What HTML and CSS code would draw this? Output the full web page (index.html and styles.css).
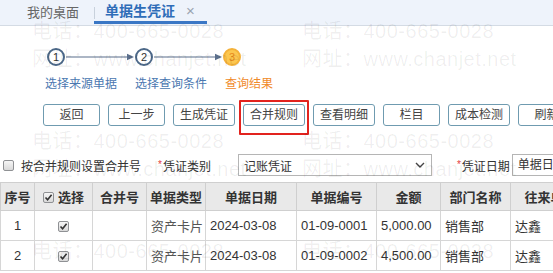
FILE: index.html
```html
<!DOCTYPE html>
<html lang="zh-CN">
<head>
<meta charset="utf-8">
<title>单据生凭证</title>
<link rel="stylesheet" href="styles.css">
</head>
<body>
<div class="page">
  <div class="tabbar">
    <div class="tab">我的桌面</div>
    <div class="tab active">单据生凭证<span class="close">×</span></div>
  </div>

  <div class="steps">
    <div class="track">
      <span class="dot">1</span>
      <svg class="arrow" width="70" height="10" viewBox="0 0 70 10"><line x1="1" y1="5" x2="64" y2="5" stroke="#5b6f8c" stroke-width="1.2"/><polygon points="62,1.8 69,5 62,8.2" fill="#5b6f8c"/></svg>
      <span class="dot">2</span>
      <svg class="arrow" width="70" height="10" viewBox="0 0 70 10"><line x1="1" y1="5" x2="64" y2="5" stroke="#5b6f8c" stroke-width="1.2"/><polygon points="62,1.8 69,5 62,8.2" fill="#5b6f8c"/></svg>
      <span class="dot current">3</span>
    </div>
    <div class="step-labels">
      <span>选择来源单据</span>
      <span>选择查询条件</span>
      <span class="current">查询结果</span>
    </div>
  </div>

  <div class="toolbar">
    <button class="btn">返回</button>
    <button class="btn">上一步</button>
    <button class="btn">生成凭证</button>
    <button class="btn highlight">合并规则</button>
    <button class="btn">查看明细</button>
    <button class="btn">栏目</button>
    <button class="btn">成本检测</button>
    <button class="btn">刷新</button>
  </div>

  <div class="filters">
    <span class="cb"></span>
    <span class="cb-label">按合并规则设置合并号</span>
    <span class="field-label type-label"><i class="req">*</i>凭证类别</span>
    <div class="select"><span>记账凭证</span><svg class="chev" width="10" height="6" viewBox="0 0 10 6"><polyline points="1,1 5,5 9,1" fill="none" stroke="#444" stroke-width="1.4"/></svg></div>
    <span class="field-label date-label"><i class="req">*</i>凭证日期</span>
    <div class="input">单据日期</div>
  </div>

  <table class="grid">
    <colgroup>
      <col class="c-no"><col class="c-sel"><col class="c-merge"><col class="c-type"><col class="c-date"><col class="c-code"><col class="c-amt"><col class="c-dept"><col class="c-unit">
    </colgroup>
    <thead>
      <tr>
        <th>序号</th>
        <th><span class="cb checked head-cb"><svg width="9" height="9" viewBox="0 0 9 9"><polyline points="1.5,4.5 3.6,6.8 7.6,1.8" fill="none" stroke="#333" stroke-width="1.6"/></svg></span>选择</th>
        <th>合并号</th>
        <th>单据类型</th>
        <th>单据日期</th>
        <th>单据编号</th>
        <th>金额</th>
        <th>部门名称</th>
        <th>往来单位</th>
      </tr>
    </thead>
    <tbody>
      <tr>
        <td class="center">1</td>
        <td class="center"><span class="cb checked"><svg width="9" height="9" viewBox="0 0 9 9"><polyline points="1.5,4.5 3.6,6.8 7.6,1.8" fill="none" stroke="#333" stroke-width="1.6"/></svg></span></td>
        <td></td>
        <td class="muted">资产卡片</td>
        <td>2024-03-08</td>
        <td>01-09-0001</td>
        <td>5,000.00</td>
        <td>销售部</td>
        <td>达鑫</td>
      </tr>
      <tr>
        <td class="center">2</td>
        <td class="center"><span class="cb checked"><svg width="9" height="9" viewBox="0 0 9 9"><polyline points="1.5,4.5 3.6,6.8 7.6,1.8" fill="none" stroke="#333" stroke-width="1.6"/></svg></span></td>
        <td></td>
        <td class="muted">资产卡片</td>
        <td>2024-03-08</td>
        <td>01-09-0002</td>
        <td>4,500.00</td>
        <td>销售部</td>
        <td>达鑫</td>
      </tr>
    </tbody>
  </table>

  <div class="watermark">
    <span class="wm t1 l1">电话：400-665-0028</span>
    <span class="wm t2 l1">网址：www.chanjet.net</span>
    <span class="wm t1 l2">电话：400-665-0028</span>
    <span class="wm t2 l2">网址：www.chanjet.net</span>
    <span class="wm t3 l1">电话：400-665-0028</span>
    <span class="wm t4 l1">网址：www.chanjet.net</span>
    <span class="wm t3 l2">电话：400-665-0028</span>
    <span class="wm t4 l2">网址：www.chanjet.net</span>
    <span class="wm t5 l1">电话：400-665-0028</span>
    <span class="wm t5 l2">电话：400-665-0028</span>
  </div>
</div>
</body>
</html>
```

FILE: styles.css
```css
html, body {
  margin: 0;
  padding: 0;
  background: #fff;
}
body {
  font-family: "Liberation Sans", "Noto Sans CJK SC", sans-serif;
  font-size: 12px;
  color: #333;
  overflow: hidden;
}
.page {
  position: relative;
  width: 553px;
  height: 273px;
  overflow: hidden;
}

/* tabs */
.tabbar {
  display: flex;
  height: 25px;
  background: #eef3fb;
  border-bottom: 1px solid #d4dbe4;
}
.tab {
  font-size: 13px;
  line-height: 25px;
  color: #666;
  padding: 0 15px 0 27px;
  white-space: nowrap;
}
.tab.active {
  position: relative;
  box-sizing: border-box;
  height: 24px;
  line-height: 22px;
  padding: 0 12px 0 11px;
  font-size: 14px;
  color: #2f6db8;
  font-weight: bold;
  border-bottom: 3px solid #3a77c5;
}
.tab.active::before {
  content: "";
  position: absolute;
  left: 0;
  top: 7px;
  width: 1px;
  height: 12px;
  background: #c8d1dc;
}
.close {
  margin-left: 11px;
  font-weight: normal;
  font-size: 15px;
  color: #9aa4b0;
}

/* steps */
.steps {
  padding-top: 22px;
}
.track {
  display: flex;
  align-items: center;
  padding-left: 47px;
  height: 18px;
}
.dot {
  flex: none;
  box-sizing: border-box;
  width: 18px;
  height: 18px;
  border: 2px solid #4c6888;
  border-radius: 50%;
  background: #fff;
  font-size: 11px;
  line-height: 14px;
  text-align: center;
  color: #333;
}
.dot.current {
  background: #fcc74f;
  border-color: #f4b23a;
  color: #e88a1c;
}
.arrow {
  display: block;
  flex: none;
}
.step-labels {
  display: flex;
  gap: 18px;
  padding-left: 45px;
  margin-top: 10px;
  line-height: 16px;
  font-size: 12px;
  color: #4a77b0;
  white-space: nowrap;
}
.step-labels .current {
  color: #f08a2a;
}

/* toolbar */
.toolbar {
  display: flex;
  gap: 8px;
  padding-left: 43px;
  margin-top: 12px;
}
.btn {
  flex: none;
  position: relative;
  box-sizing: border-box;
  height: 22px;
  min-width: 57px;
  padding: 0 6px;
  border: 1px solid #6f9bb0;
  border-radius: 3px;
  background: #fff;
  font-family: inherit;
  font-size: 12px;
  line-height: 20px;
  color: #444;
  white-space: nowrap;
}
.btn.highlight::after {
  content: "";
  position: absolute;
  left: -5px;
  right: -5px;
  top: -5px;
  bottom: -10px;
  border: 2px solid #e2231e;
  border-radius: 1px;
}

/* filters */
.filters {
  display: flex;
  align-items: center;
  height: 22px;
  margin-top: 28px;
  white-space: nowrap;
}
.filters > * {
  flex: none;
}
.cb {
  display: inline-flex;
  align-items: center;
  justify-content: center;
  box-sizing: border-box;
  width: 11px;
  height: 11px;
  border: 1px solid #8f9194;
  border-radius: 2px;
  background: linear-gradient(#f6f6f6, #d9d9d9);
  vertical-align: middle;
}
.filters > .cb {
  margin-left: 3px;
}
.cb-label {
  margin-left: 7px;
  color: #333;
}
.field-label {
  color: #333;
}
.req {
  font-style: normal;
  color: #e4393c;
  font-size: 10px;
  position: relative;
  top: -3px;
  margin-right: 1px;
}
.type-label {
  margin-left: 17px;
}
.date-label {
  margin-left: 25px;
}
.select {
  display: flex;
  align-items: center;
  justify-content: space-between;
  box-sizing: border-box;
  width: 194px;
  height: 22px;
  margin-left: 27px;
  padding: 0 6px 0 5px;
  border: 1px solid #b5b5b5;
  background: #fff;
}
.input {
  box-sizing: border-box;
  width: 100px;
  height: 22px;
  margin-left: 2px;
  padding-left: 5px;
  line-height: 20px;
  border: 1px solid #b5b5b5;
}

/* table */
.grid {
  margin-top: 6px;
  border-collapse: collapse;
  table-layout: fixed;
  width: 590px;
}
.c-no { width: 34px; }
.c-sel { width: 58px; }
.c-merge { width: 54px; }
.c-type { width: 59px; }
.c-date { width: 91px; }
.c-code { width: 80px; }
.c-amt { width: 64px; }
.c-dept { width: 70px; }
.c-unit { width: 80px; }
.grid th {
  height: 27px;
  padding: 0;
  background: #e9e9e9;
  border: 1px solid #cfcfcf;
  font-size: 13px;
  font-weight: bold;
  color: #333;
  text-align: center;
  white-space: nowrap;
  overflow: hidden;
}
.grid td {
  height: 29px;
  padding: 0 4px;
  border: 1px solid #d6d6d6;
  font-size: 13px;
  color: #333;
  white-space: nowrap;
}
.grid td.center {
  text-align: center;
}
.grid td.muted {
  color: #555;
}
.head-cb {
  margin-right: 4px;
  position: relative;
  top: -1px;
}

/* watermark */
.watermark {
  position: absolute;
  inset: 0;
  pointer-events: none;
}
.wm {
  position: absolute;
  font-size: 20px;
  letter-spacing: 0.5px;
  line-height: 20px;
  color: rgba(0, 0, 0, 0.065);
  white-space: nowrap;
}
.l1 { left: 32px; }
.l2 { left: 302px; }
.t1 { top: 21px; }
.t2 { top: 49px; }
.t3 { top: 131px; }
.t4 { top: 159px; }
.t5 { top: 241px; }
```
